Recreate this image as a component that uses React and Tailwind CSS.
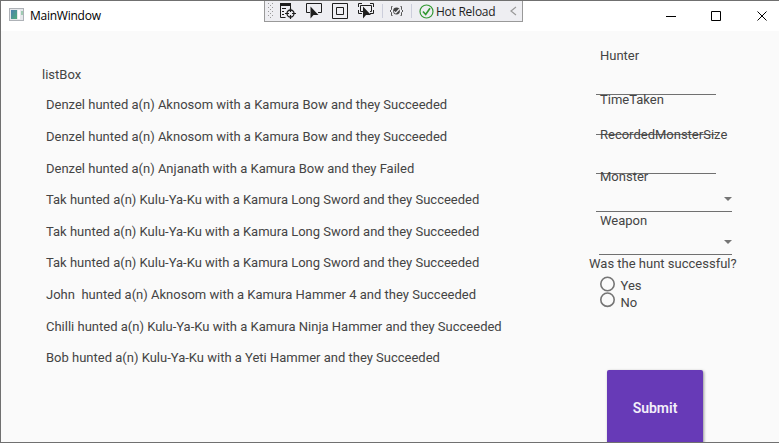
import React from "react";

const hunts = [
  { text: "Denzel hunted a(n) Aknosom with a Kamura Bow and they Succeeded" },
  { text: "Denzel hunted a(n) Aknosom with a Kamura Bow and they Succeeded" },
  { text: "Denzel hunted a(n) Anjanath with a Kamura Bow and they Failed" },
  { text: "Tak hunted a(n) Kulu-Ya-Ku with a Kamura Long Sword and they Succeeded" },
  { text: "Tak hunted a(n) Kulu-Ya-Ku with a Kamura Long Sword and they Succeeded" },
  { text: "Tak hunted a(n) Kulu-Ya-Ku with a Kamura Long Sword and they Succeeded" },
  { text: "John  hunted a(n) Aknosom with a Kamura Hammer 4 and they Succeeded" },
  { text: "Chilli hunted a(n) Kulu-Ya-Ku with a Kamura Ninja Hammer and they Succeeded" },
  { text: "Bob hunted a(n) Kulu-Ya-Ku with a Yeti Hammer and they Succeeded" },
];

function DebugToolbar() {
  return (
    <div className="absolute left-[263px] -top-px flex h-[22px] w-[259px] items-center border border-t-0 border-[#999999] bg-[#eeeef2] pt-px">
      <svg className="ml-[2px] shrink-0" width="8" height="18" shapeRendering="crispEdges" fill="#999">
        {[1, 5, 9, 13].map((y) => (
          <g key={y}>
            <rect x="1" y={y} width="1" height="1" />
            <rect x="5" y={y} width="1" height="1" />
            <rect x="3" y={y + 2} width="1" height="1" />
          </g>
        ))}
      </svg>
      <svg className="ml-[5px] shrink-0" width="16" height="16" fill="none" stroke="#1e1e1e">
        <path d="M0 1.500h11" strokeWidth="3" />
        <path d="M.5 2v12.500h5M10.500 3v2M2 5.500h4M2 8.500h2M2 11.500h2" />
        <circle cx="10.500" cy="10.500" r="3.500" strokeWidth="1.300" />
        <path d="M10.500 5v4M10.500 12v4M5 10.500h4M12 10.500h4" strokeWidth="1.200" />
      </svg>
      <svg className="ml-[10px] shrink-0" width="17" height="16" fill="none" stroke="#1e1e1e">
        <path d="M4 9.500H.5v-9h15v9H12" />
        <path d="M4.500 3.500v12l3-3.500h5z" fill="#1e1e1e" stroke="none" />
      </svg>
      <svg className="ml-[9px] shrink-0" width="17" height="16" fill="none" stroke="#1e1e1e">
        <path d="M.5.5h15v15H.5zM4.500 4.500h7v7h-7z" />
      </svg>
      <svg className="ml-[9px] shrink-0" width="17" height="16" fill="none" stroke="#1e1e1e">
        <path d="M.5 4V.5H4M12 .5h3.500V4M.5 7v3.500H4M12 10.500h3.500V7M5 8.500H2.500v-6h11v6H12" />
        <path d="M5 3.500v12l3-3.500h5z" fill="#1e1e1e" stroke="none" />
      </svg>
      <div className="ml-[7px] h-[14px] w-px bg-[#cccedb]" />
      <svg className="ml-[6px] shrink-0" width="15" height="14" fill="none" stroke="#444">
        <path d="M3.500 2.500H2.500v3L1 7l1.500 1.500v3h1M11.500 2.500h1v3L14 7l-1.500 1.500v3h-1" strokeWidth=".9" />
        <circle cx="7.500" cy="7" r="3.400" fill="#444" stroke="none" />
        <path d="M5 7.500l1.800 1.500L10.500 5" stroke="#eeeef2" strokeWidth="1.200" />
      </svg>
      <div className="ml-[7px] h-[14px] w-px bg-[#cccedb]" />
      <svg className="ml-[7px] shrink-0" width="15" height="15" fill="none" stroke="#339933">
        <circle cx="7.500" cy="7.500" r="6.500" strokeWidth="1.200" />
        <path d="M4 7.500l2.700 3L11 4.200" strokeWidth="1.700" />
      </svg>
      <span className="ml-[2px] whitespace-nowrap pt-px font-['Open_Sans',sans-serif] text-[12px] leading-[16px] tracking-[-0.25px] text-[#1e1e1e]">
        Hot Reload
      </span>
      <svg className="ml-auto mr-[5px] shrink-0" width="7" height="10" fill="none" stroke="#999">
        <path d="M6 1L1 5l5 4" strokeWidth="1.200" />
      </svg>
    </div>
  );
}

function TitleBar() {
  return (
    <header className="flex h-[30px] shrink-0 items-center bg-white">
      <svg className="-mt-[3px] ml-[8px] shrink-0" width="15" height="13" shapeRendering="crispEdges">
        <defs>
          <linearGradient id="pane" x1="0" y1="0" x2="1" y2="1">
            <stop offset="0" stopColor="#4a7fb0" />
            <stop offset="1" stopColor="#4fae79" />
          </linearGradient>
        </defs>
        <rect x=".5" y=".5" width="14" height="12" fill="#e6e8eb" stroke="#aeb2b7" />
        <rect x="2" y="2" width="6" height="9" fill="url(#pane)" />
        <rect x="9" y="2" width="2" height="9" fill="#fff" />
        <rect x="12" y="3" width="2" height="4" fill="#9fcbb2" />
      </svg>
      <h1 className="ml-[6px] font-['Open_Sans',sans-serif] text-[12px] leading-[16px] tracking-[-0.25px] text-black">
        MainWindow
      </h1>
      <div className="ml-auto flex items-center pr-[11px]">
        <svg width="11" height="10" stroke="#000" fill="none">
          <path d="M0 5.500h10" />
        </svg>
        <svg className="ml-[34px]" width="11" height="10" stroke="#000" fill="none">
          <path d="M.5.5h9v9h-9z" />
        </svg>
        <svg className="ml-[35px]" width="11" height="10" stroke="#000" fill="none">
          <path d="M.5.5l9 9M9.500.5l-9 9" />
        </svg>
      </div>
    </header>
  );
}

function Caret() {
  return (
    <svg className="ml-auto" width="8" height="4">
      <path d="M0 0h8L4 4z" fill="#757575" />
    </svg>
  );
}

function HuntForm() {
  return (
    <form className="flex w-[190px] flex-col leading-[16px]">
      <div className="ml-[7px] h-[64px] w-[120px] shrink-0 border-b border-[#707070] pl-[4px] pt-[17px]">
        <label className="block">Hunter</label>
      </div>
      <div className="ml-[7px] h-[40px] w-[120px] shrink-0 border-b border-[#707070] pl-[4px]">
        <label className="-mt-[3px] block">TimeTaken</label>
      </div>
      <div className="ml-[7px] h-[39px] w-[120px] shrink-0 border-b border-[#707070] pl-[4px]">
        <label className="-mt-[8px] block">RecordedMonsterSize</label>
      </div>
      <div className="ml-[7px] flex h-[38px] w-[136px] shrink-0 flex-col border-b border-[#707070] pl-[4px]">
        <label className="-mt-[5px] block">Monster</label>
        <div className="mt-[12px] flex">
          <Caret />
        </div>
      </div>
      <div className="ml-[10px] flex h-[43px] w-[133px] shrink-0 flex-col border-b border-[#707070] pl-px">
        <label className="mt-px block">Weapon</label>
        <div className="mt-[11px] flex">
          <Caret />
        </div>
      </div>
      <p className="mt-px">Was the hunt successful?</p>
      <div className="ml-[11px] mt-[4px] flex h-[32px] shrink-0">
        <svg className="shrink-0" width="16" height="32" fill="none" stroke="#757575" strokeWidth="1.600">
          <circle cx="7.500" cy="8" r="6.700" />
          <circle cx="7.500" cy="23.700" r="6.700" />
        </svg>
        <div className="ml-[4.500px] flex flex-col gap-px pt-[2px]">
          <span>Yes</span>
          <span>No</span>
        </div>
      </div>
      <button
        type="button"
        className="ml-[18px] mt-[62px] h-[96px] w-[96px] shrink-0 rounded-[2px] bg-[#673ab7] pb-[20px] text-[14px] font-semibold text-[#f3effa] shadow-[1px_1px_3px_rgba(0,0,0,0.4)]"
      >
        Submit
      </button>
    </form>
  );
}

export default function App() {
  return (
    <div className="relative flex h-[443px] w-[779px] flex-col overflow-hidden border-y border-l border-[#707070] bg-[#fafafa] font-[Roboto,sans-serif] text-[13px] text-[#444444]">
      <TitleBar />
      <main className="flex min-h-0 flex-1">
        <section className="w-[588px] shrink-0 pl-[41px] pt-[36px]">
          <h2 className="leading-[16px]">listBox</h2>
          <ul className="mt-[6.280px] pl-[4px]">
            {hunts.map((hunt, i) => (
              <li key={i} className="flex h-[31.625px] items-center whitespace-pre">
                {hunt.text}
              </li>
            ))}
          </ul>
        </section>
        <HuntForm />
      </main>
      <DebugToolbar />
    </div>
  );
}
